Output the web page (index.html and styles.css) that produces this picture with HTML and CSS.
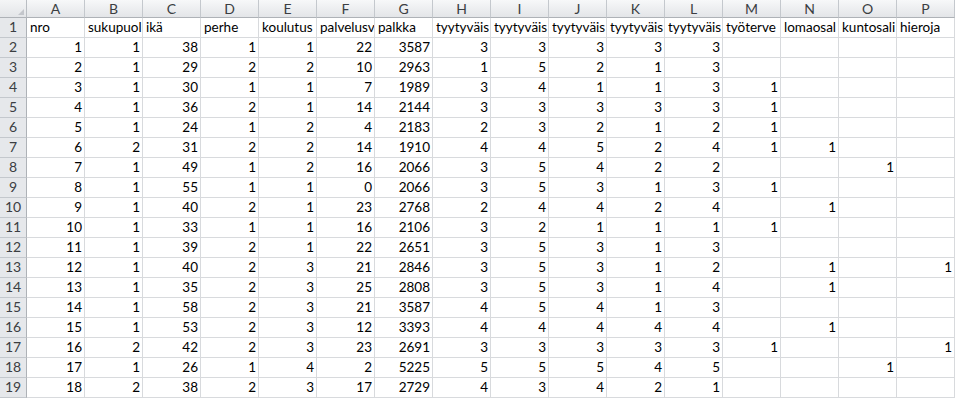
FILE: index.html
```html
<!DOCTYPE html>
<html lang="fi">
<head>
<meta charset="utf-8">
<title>Taulukko</title>
<link rel="stylesheet" href="styles.css">
</head>
<body>
<div class="sheet">
<div class="corner"><svg width="6" height="6" viewBox="0 0 6 6"><polygon points="6,0 6,6 0,6" fill="#c3c6cb"/></svg></div>
<div class="ch">A</div><div class="ch">B</div><div class="ch">C</div><div class="ch">D</div><div class="ch">E</div><div class="ch">F</div><div class="ch">G</div><div class="ch">H</div><div class="ch">I</div><div class="ch">J</div><div class="ch">K</div><div class="ch">L</div><div class="ch">M</div><div class="ch">N</div><div class="ch">O</div><div class="ch">P</div>

<div class="rh">1</div><div class="t">nro</div><div class="t">sukupuol</div><div class="t">ikä</div><div class="t">perhe</div><div class="t">koulutus</div><div class="t">palvelusv</div><div class="t">palkka</div><div class="t">tyytyväis</div><div class="t">tyytyväis</div><div class="t">tyytyväis</div><div class="t">tyytyväis</div><div class="t">tyytyväis</div><div class="t">työterve</div><div class="t">lomaosal</div><div class="t">kuntosali</div><div class="t">hieroja</div>

<div class="rh">2</div><div>1</div><div>1</div><div>38</div><div>1</div><div>1</div><div>22</div><div>3587</div><div>3</div><div>3</div><div>3</div><div>3</div><div>3</div><div></div><div></div><div></div><div></div>
<div class="rh">3</div><div>2</div><div>1</div><div>29</div><div>2</div><div>2</div><div>10</div><div>2963</div><div>1</div><div>5</div><div>2</div><div>1</div><div>3</div><div></div><div></div><div></div><div></div>
<div class="rh">4</div><div>3</div><div>1</div><div>30</div><div>1</div><div>1</div><div>7</div><div>1989</div><div>3</div><div>4</div><div>1</div><div>1</div><div>3</div><div>1</div><div></div><div></div><div></div>
<div class="rh">5</div><div>4</div><div>1</div><div>36</div><div>2</div><div>1</div><div>14</div><div>2144</div><div>3</div><div>3</div><div>3</div><div>3</div><div>3</div><div>1</div><div></div><div></div><div></div>
<div class="rh">6</div><div>5</div><div>1</div><div>24</div><div>1</div><div>2</div><div>4</div><div>2183</div><div>2</div><div>3</div><div>2</div><div>1</div><div>2</div><div>1</div><div></div><div></div><div></div>
<div class="rh">7</div><div>6</div><div>2</div><div>31</div><div>2</div><div>2</div><div>14</div><div>1910</div><div>4</div><div>4</div><div>5</div><div>2</div><div>4</div><div>1</div><div>1</div><div></div><div></div>
<div class="rh">8</div><div>7</div><div>1</div><div>49</div><div>1</div><div>2</div><div>16</div><div>2066</div><div>3</div><div>5</div><div>4</div><div>2</div><div>2</div><div></div><div></div><div>1</div><div></div>
<div class="rh">9</div><div>8</div><div>1</div><div>55</div><div>1</div><div>1</div><div>0</div><div>2066</div><div>3</div><div>5</div><div>3</div><div>1</div><div>3</div><div>1</div><div></div><div></div><div></div>
<div class="rh">10</div><div>9</div><div>1</div><div>40</div><div>2</div><div>1</div><div>23</div><div>2768</div><div>2</div><div>4</div><div>4</div><div>2</div><div>4</div><div></div><div>1</div><div></div><div></div>
<div class="rh">11</div><div>10</div><div>1</div><div>33</div><div>1</div><div>1</div><div>16</div><div>2106</div><div>3</div><div>2</div><div>1</div><div>1</div><div>1</div><div>1</div><div></div><div></div><div></div>
<div class="rh">12</div><div>11</div><div>1</div><div>39</div><div>2</div><div>1</div><div>22</div><div>2651</div><div>3</div><div>5</div><div>3</div><div>1</div><div>3</div><div></div><div></div><div></div><div></div>
<div class="rh">13</div><div>12</div><div>1</div><div>40</div><div>2</div><div>3</div><div>21</div><div>2846</div><div>3</div><div>5</div><div>3</div><div>1</div><div>2</div><div></div><div>1</div><div></div><div>1</div>
<div class="rh">14</div><div>13</div><div>1</div><div>35</div><div>2</div><div>3</div><div>25</div><div>2808</div><div>3</div><div>5</div><div>3</div><div>1</div><div>4</div><div></div><div>1</div><div></div><div></div>
<div class="rh">15</div><div>14</div><div>1</div><div>58</div><div>2</div><div>3</div><div>21</div><div>3587</div><div>4</div><div>5</div><div>4</div><div>1</div><div>3</div><div></div><div></div><div></div><div></div>
<div class="rh">16</div><div>15</div><div>1</div><div>53</div><div>2</div><div>3</div><div>12</div><div>3393</div><div>4</div><div>4</div><div>4</div><div>4</div><div>4</div><div></div><div>1</div><div></div><div></div>
<div class="rh">17</div><div>16</div><div>2</div><div>42</div><div>2</div><div>3</div><div>23</div><div>2691</div><div>3</div><div>3</div><div>3</div><div>3</div><div>3</div><div>1</div><div></div><div></div><div>1</div>
<div class="rh">18</div><div>17</div><div>1</div><div>26</div><div>1</div><div>4</div><div>2</div><div>5225</div><div>5</div><div>5</div><div>5</div><div>4</div><div>5</div><div></div><div></div><div>1</div><div></div>
<div class="rh">19</div><div>18</div><div>2</div><div>38</div><div>2</div><div>3</div><div>17</div><div>2729</div><div>4</div><div>3</div><div>4</div><div>2</div><div>1</div><div></div><div></div><div></div><div></div>
</div>
</body>
</html>
```

FILE: styles.css
```css
html, body {
  margin: 0;
  padding: 0;
  background: #ffffff;
}

.sheet {
  display: grid;
  grid-template-columns: 27px repeat(16, 58px);
  grid-template-rows: 18px repeat(19, 20px);
  width: 955px;
  height: 398px;
  overflow: hidden;
  font-family: Lato, "Liberation Sans", Arial, sans-serif;
  font-size: 13.5px;
  color: #000000;
}

.sheet > div {
  box-sizing: border-box;
  border-right: 1px solid #d8dadd;
  border-bottom: 1px solid #d8dadd;
  padding: 0 2px 2px 3px;
  display: flex;
  align-items: flex-end;
  justify-content: flex-end;
  white-space: nowrap;
  overflow: hidden;
  line-height: 16px;
}

.sheet > .t {
  justify-content: flex-start;
  padding-right: 0;
}

.sheet > .corner {
  background: linear-gradient(#f4f5f6, #e3e5e8);
  border-right: 1px solid #b9bdc2;
  border-bottom: 1px solid #aeb2b7;
  padding: 0 2px 2px 0;
  align-items: flex-end;
  justify-content: flex-end;
}

.sheet > .ch {
  background: linear-gradient(#f7f8f9, #e3e5e8);
  border-right: 1px solid #c4c8cd;
  border-bottom: 1px solid #aeb2b7;
  justify-content: center;
  align-items: center;
  padding: 0;
  color: #3b3e42;
  font-size: 14px;
  line-height: 17px;
}

.sheet > .rh {
  background: #e6e8eb;
  border-right: 1px solid #aeb2b7;
  border-bottom: 1px solid #c4c8cd;
  justify-content: center;
  padding: 0 0 2px 0;
  color: #3b3e42;
  font-size: 14px;
}
```
